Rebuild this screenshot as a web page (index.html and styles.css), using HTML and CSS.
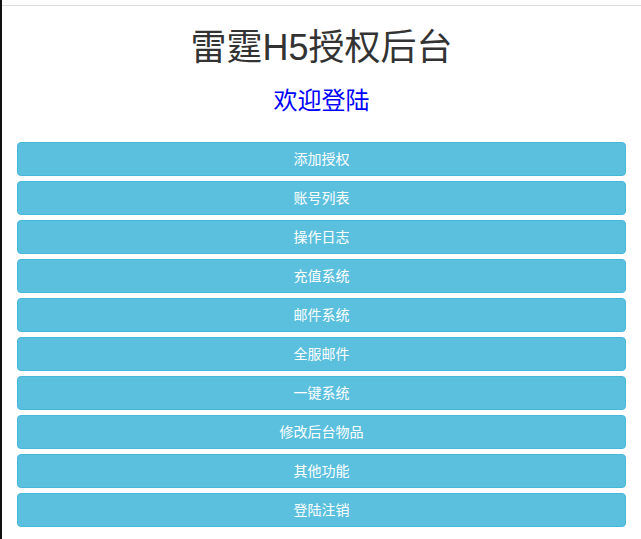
FILE: index.html
```html
<!DOCTYPE html>
<html lang="zh-CN">
<head>
<meta charset="utf-8">
<title>雷霆H5授权后台</title>
<link rel="stylesheet" href="styles.css">
</head>
<body>
<div class="page">
  <div class="topbar"></div>
  <div class="container">
    <h1 class="title">雷霆H5授权后台</h1>
    <h3 class="welcome">欢迎登陆</h3>
    <div class="menu">
      <a class="btn" href="#">添加授权</a>
      <a class="btn" href="#">账号列表</a>
      <a class="btn" href="#">操作日志</a>
      <a class="btn" href="#">充值系统</a>
      <a class="btn" href="#">邮件系统</a>
      <a class="btn" href="#">全服邮件</a>
      <a class="btn" href="#">一键系统</a>
      <a class="btn" href="#">修改后台物品</a>
      <a class="btn" href="#">其他功能</a>
      <a class="btn" href="#">登陆注销</a>
    </div>
  </div>
</div>
</body>
</html>
```
FILE: styles.css
```css
html, body {
  margin: 0;
  padding: 0;
  background: #fff;
}
body {
  font-family: "Liberation Sans", "Noto Sans CJK SC", sans-serif;
  font-size: 14px;
  line-height: 1.42857;
  color: #333;
}
.page {
  border-left: 2px solid #111;
  min-height: 539px;
  box-sizing: border-box;
}
.topbar {
  height: 5px;
  border-bottom: 1px solid #dcdcdc;
}
.container {
  padding: 0 15px;
  display: flex;
  flex-direction: column;
}
.title {
  margin: 22px 0 0;
  height: 40px;
  font-size: 36px;
  font-weight: 400;
  line-height: 40px;
  text-align: center;
  color: #333;
}
.welcome {
  margin: 19px 0 0;
  height: 27px;
  font-size: 24px;
  font-weight: 400;
  line-height: 27px;
  text-align: center;
  color: #00f;
}
.menu {
  margin-top: 28px;
  display: flex;
  flex-direction: column;
  gap: 5px;
}
.btn {
  display: block;
  height: 20px;
  padding: 6px 12px;
  font-size: 14px;
  line-height: 20px;
  text-align: center;
  color: #fff;
  text-decoration: none;
  background: #5bc0de;
  border: 1px solid #46b8da;
  border-radius: 4px;
}
```
